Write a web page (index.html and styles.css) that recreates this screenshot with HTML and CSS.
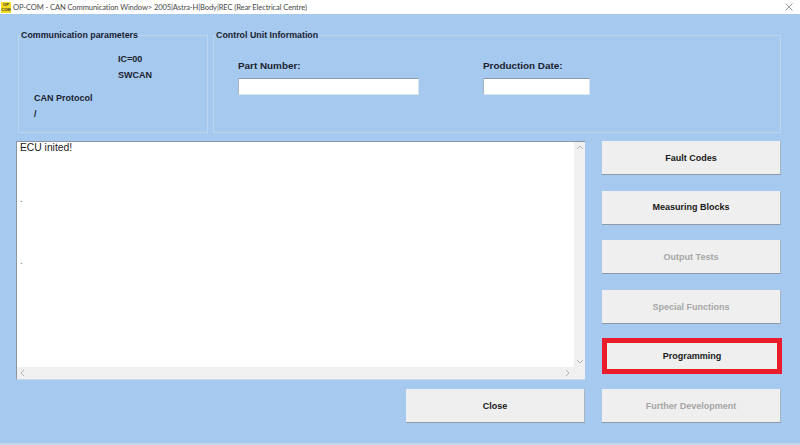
FILE: index.html
```html
<!DOCTYPE html>
<html lang="en">
<head>
<meta charset="utf-8">
<title>OP-COM</title>
<link rel="stylesheet" href="styles.css">
</head>
<body>
<div class="window">
  <header class="titlebar">
    <span class="logo"><span>OP</span><span>COM</span></span>
    <span class="title">OP-COM - CAN Communication Window&gt; 2005|Astra-H|Body|REC (Rear Electrical Centre)</span>
    <svg class="x" viewBox="0 0 8 8" width="8" height="8"><path d="M.5.5l7 7M7.5.5l-7 7" stroke="#6a6a6a" stroke-width=".7" fill="none"/></svg>
  </header>
  <main class="content">
    <section class="groups">
      <fieldset class="group comm">
        <legend>Communication parameters</legend>
        <div class="ic"><p>IC=00</p><p>SWCAN</p></div>
        <div class="proto"><p>CAN Protocol</p><p>/</p></div>
      </fieldset>
      <fieldset class="group unit">
        <legend>Control Unit Information</legend>
        <div class="fields">
          <div class="field part"><label>Part Number:</label><div class="input"></div></div>
          <div class="field date"><label>Production Date:</label><div class="input"></div></div>
        </div>
      </fieldset>
    </section>
    <section class="lower">
      <div class="left">
        <div class="log">
          <div class="log-body">
            <div class="log-text">
              <p>ECU inited!</p>
              <p class="dot first">.</p>
              <p class="dot second">.</p>
            </div>
            <div class="vbar">
              <svg viewBox="0 0 8 5" width="8" height="5"><path d="M1 4l3-3 3 3" stroke="#b4b4b4" fill="none"/></svg>
              <svg viewBox="0 0 8 5" width="8" height="5"><path d="M1 1l3 3 3-3" stroke="#b4b4b4" fill="none"/></svg>
            </div>
          </div>
          <div class="hbar">
            <svg viewBox="0 0 5 8" width="5" height="8"><path d="M4 1L1 4l3 3" stroke="#b4b4b4" fill="none"/></svg>
            <svg viewBox="0 0 5 8" width="5" height="8"><path d="M1 1l3 3-3 3" stroke="#b4b4b4" fill="none"/></svg>
          </div>
        </div>
        <button class="btn close">Close</button>
      </div>
      <div class="right">
        <button class="btn">Fault Codes</button>
        <button class="btn">Measuring Blocks</button>
        <button class="btn off">Output Tests</button>
        <button class="btn off">Special Functions</button>
        <button class="btn hot">Programming</button>
        <button class="btn off">Further Development</button>
      </div>
    </section>
  </main>
</div>
</body>
</html>
```

FILE: styles.css
```css
* { box-sizing: border-box; }
html, body { margin: 0; height: 100%; overflow: hidden; }
body { font-family: "Liberation Sans", Arial, sans-serif; background: #a6c9ef; }
p { margin: 0; }
.window { width: 800px; height: 445px; display: flex; flex-direction: column; }
.titlebar { height: 14px; flex: none; background: #fff; display: flex; align-items: center; padding: 0 7px 0 1px; font-family: Lato, "Liberation Sans", sans-serif; font-size: 7.6px; letter-spacing: -0.12px; color: #4a4a4a; }
.logo { width: 10px; height: 11px; margin-right: 2px; background: #f4dc1e; display: flex; flex-direction: column; font-family: "Liberation Sans", sans-serif; font-size: 4px; letter-spacing: 0; line-height: 5px; font-weight: bold; text-align: center; color: #333; overflow: hidden; }
.title { flex: 1; white-space: nowrap; }
.content { flex: 1; min-height: 0; display: flex; flex-direction: column; padding: 15px 19px 0 16px; border-bottom: 2px solid #c6d6e6; }
.groups { display: flex; gap: 5px; height: 104px; flex: none; padding-left: 2px; }
.group { margin: 0; padding: 0; border: 1px solid #bcd5f0; height: 104px; min-width: 0; }
.group legend { font-size: 8.85px; font-weight: bold; color: #1a2230; padding: 0; margin-left: 2px; line-height: 12px; }
.comm { width: 190px; font-size: 9px; font-weight: bold; color: #1a2230; }
.unit { width: 568px; }
.ic { padding: 13px 0 0 99px; line-height: 11px; display: flex; flex-direction: column; gap: 5px; }
.proto { padding: 12px 0 0 15px; line-height: 11px; display: flex; flex-direction: column; gap: 5px; }
.fields { display: flex; padding: 18px 0 0 24px; }
.part { width: 245px; }
.field label { display: block; font-size: 9.9px; font-weight: bold; color: #1a2230; line-height: 13px; margin-bottom: 6px; }
.input { height: 17px; background: #fff; border: 1px solid #d8e4f0; border-top-color: #8c9aa8; border-left-color: #a8b4c0; }
.part .input { width: 181px; }
.date .input { width: 107px; }
.lower { display: flex; gap: 17px; margin-top: 8px; }
.left { width: 569px; display: flex; flex-direction: column; align-items: flex-end; gap: 9px; }
.log { width: 569px; height: 239px; background: #fff; border-top: 1px solid #8a96a6; border-left: 1px solid #8a96a6; border-bottom: 1px solid #c8d8ea; display: flex; flex-direction: column; }
.log-body { flex: 1; display: flex; min-height: 0; }
.log-text { flex: 1; font-size: 10.3px; color: #222; padding: 0 3px; line-height: 12px; }
.dot { color: #777; }
.dot.first { margin-top: 39px; }
.dot.second { margin-top: 50px; }
.vbar { width: 11px; background: #f0f0f0; display: flex; flex-direction: column; justify-content: space-between; align-items: center; padding: 3px 0 3px; }
.hbar { height: 12px; flex: none; background: #f0f0f0; display: flex; justify-content: space-between; align-items: center; padding: 0 15px 0 3px; }
.right { width: 179px; display: flex; flex-direction: column; gap: 15.7px; }
.btn { height: 34px; width: 179px; padding: 0; background: #efefef; border: 0; border-bottom: 1.5px solid #8f9aa8; border-right: 1px solid #aab4c0; font: bold 9px "Liberation Sans", Arial, sans-serif; color: #181818; }
.btn.off { color: #a6a6a6; }
.btn.hot { width: 180px; height: 36px; margin-top: -2px; border: 5px solid #ea1c2b; }
```
